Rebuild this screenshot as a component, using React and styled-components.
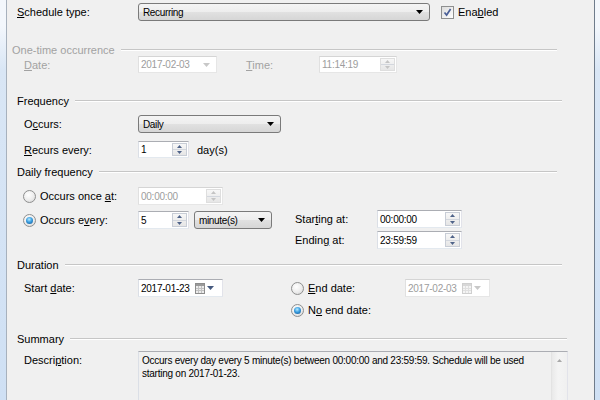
import React from 'react';
import styled, { createGlobalStyle, css } from 'styled-components';

const GlobalStyle = createGlobalStyle`
  html, body {
    margin: 0;
    padding: 0;
    background: #f0f0f0;
  }
  body {
    font-family: "Liberation Sans", Arial, sans-serif;
    font-size: 11px;
    color: #000;
    overflow: hidden;
  }
`;

const Window = styled.div`
  display: flex;
  width: 600px;
  height: 400px;
  overflow: hidden;
  background: #f0f0f0;
`;

const Frame = styled.div`
  flex: none;
  width: ${p => p.$w}px;
  background: linear-gradient(180deg, #f3f7fc 0, #f3f7fc 26px, #d9e6f5 70px, #cfe0f4 100%);
  ${p => (p.$left ? 'border-right: 1px solid #a7b1bd;' : 'border-left: 1px solid #6f7c8b;')}
`;

const Panel = styled.div`
  flex: 1;
  min-width: 0;
  display: flex;
  flex-direction: column;
  padding-top: 3px;
`;

const Key = styled.span`
  text-decoration: underline;
`;

const TopRow = styled.div`
  display: flex;
  align-items: center;
  height: 18px;
  padding-left: 10px;
`;

const Row = styled.div`
  display: flex;
  align-items: center;
  height: ${p => p.$h || 18}px;
  margin-top: ${p => p.$mt || 0}px;
  padding-left: ${p => (p.$pl === undefined ? 17 : p.$pl)}px;
`;

const Label = styled.span`
  flex: none;
  width: ${p => (p.$w ? `${p.$w}px` : 'auto')};
  margin-left: ${p => p.$ml || 0}px;
  white-space: nowrap;
  color: ${p => (p.$disabled ? '#a2a2a2' : '#000')};
`;

const Header = styled.div`
  display: flex;
  align-items: center;
  height: 12px;
  line-height: 12px;
  margin-top: ${p => p.$mt}px;
  padding-left: ${p => p.$pl}px;
  margin-right: ${p => p.$mr}px;
  white-space: nowrap;
  color: ${p => (p.$disabled ? '#a2a2a2' : '#000')};

  &::after {
    content: '';
    flex: 1;
    margin-left: 6px;
    border-top: 1px solid #c6c6c6;
    border-bottom: 1px solid #ffffff;
  }
`;

const Columns = styled.div`
  display: flex;
`;

const Column = styled.div`
  flex: none;
  width: ${p => (p.$w ? `${p.$w}px` : 'auto')};
  display: flex;
  flex-direction: column;
  padding-top: ${p => p.$pt || 0}px;
`;

/* read-only combo box, Win7 look */
const Combo = styled.div`
  flex: none;
  box-sizing: border-box;
  width: ${p => p.$w}px;
  height: 18px;
  margin-left: ${p => p.$ml || 0}px;
  display: flex;
  align-items: center;
  justify-content: space-between;
  padding: 0 6px 0 4px;
  border: 1px solid #7a7a7a;
  border-radius: 3px;
  background: linear-gradient(180deg, #f4f4f4 0%, #ededed 50%, #e1e1e1 50%, #d6d6d6 100%);
`;

const ComboText = styled.span`
  font-size: 10px;
  letter-spacing: -0.35px;
  white-space: nowrap;
`;

const Field = styled.div`
  flex: none;
  box-sizing: border-box;
  width: ${p => p.$w}px;
  height: ${p => p.$h || 17}px;
  display: flex;
  align-items: center;
  padding-left: 2px;
  background: #fff;
  border: 1px solid;
  border-color: ${p => (p.$disabled ? '#d5d5d5 #e6e6e6 #e6e6e6 #e0e0e0' : '#abadb3 #e2e3ea #e3e9ef #dbdfe6')};
  color: ${p => (p.$disabled ? '#9d9d9d' : '#000')};
`;

const FieldText = styled.span`
  flex: 1;
  font-size: 10px;
  letter-spacing: -0.25px;
  white-space: nowrap;
`;

const SpinBox = styled.div`
  flex: none;
  box-sizing: border-box;
  width: 15px;
  height: calc(100% - 2px);
  margin-right: 1px;
  display: flex;
  flex-direction: column;
  border: 1px solid ${p => (p.$disabled ? '#dedede' : '#c8cdd6')};
  background: linear-gradient(180deg, #f7f7f7, #e6e6e6);
`;

const SpinHalf = styled.div`
  flex: 1;
  display: flex;
  align-items: center;
  justify-content: center;
  & + & {
    border-top: 1px solid ${p => (p.$disabled ? '#e2e2e2' : '#d3d7de')};
  }
`;

const PickerButton = styled.div`
  flex: none;
  display: flex;
  align-items: center;
  gap: 2px;
  margin-right: ${p => p.$mr}px;
`;

const Radio = styled.span`
  position: relative;
  flex: none;
  box-sizing: border-box;
  width: 13px;
  height: 13px;
  border-radius: 50%;
  border: 1px solid ${p => (p.$disabled ? '#c0c0c0' : '#8e8f8f')};
  background: radial-gradient(circle at 40% 35%, #ffffff 0%, #ececec 55%, #cfcfcf 100%);

  ${p =>
    p.$checked &&
    css`
      &::after {
        content: '';
        position: absolute;
        left: 2px;
        top: 2px;
        width: 7px;
        height: 7px;
        border-radius: 50%;
        background: radial-gradient(circle at 45% 35%, #b8ebff 0%, #3a9ee0 45%, #0d4f8c 100%);
      }
    `}
`;

const RadioLabel = styled(Label)`
  margin-left: 4px;
`;

const CheckBox = styled.span`
  flex: none;
  box-sizing: border-box;
  width: 13px;
  height: 13px;
  margin-left: 11px;
  display: flex;
  align-items: center;
  justify-content: center;
  border: 1px solid #8e8f8f;
  background: linear-gradient(135deg, #dcdcdc, #ffffff);
`;

const DescRow = styled.div`
  display: flex;
  align-items: flex-start;
  margin-top: 6px;
  padding-left: 17px;
`;

const DescLabel = styled(Label)`
  padding-top: 3px;
`;

const TextArea = styled.div`
  flex: none;
  box-sizing: border-box;
  width: 430px;
  height: 70px;
  display: flex;
  border: 1px solid;
  border-color: #abadb3 #e2e3ea #e3e9ef #dbdfe6;
  background: #f0f0f0;
`;

const TextBody = styled.div`
  flex: 1;
  padding: 2px 3px;
  font-size: 10px;
  letter-spacing: -0.25px;
  line-height: 13px;
  white-space: nowrap;
  overflow: hidden;
`;

const ScrollBar = styled.div`
  flex: none;
  width: 15px;
  display: flex;
  justify-content: center;
  padding-top: 7px;
  border-left: 1px solid #e3e3e3;
  background: linear-gradient(90deg, #e9e9e9, #f4f4f4 40%, #f0f0f0);
`;

const Arrow = ({ up, color = '#000', w = 7, h = 4 }) => (
  <svg width={w} height={h} viewBox={`0 0 ${w} ${h}`}>
    <path d={up ? `M0 ${h}H${w}L${w / 2} 0Z` : `M0 0H${w}L${w / 2} ${h}Z`} fill={color} />
  </svg>
);

const Spin = ({ w, h, value, disabled }) => {
  const c = disabled ? '#c4c4c4' : '#4f6389';
  return (
    <Field $w={w} $h={h} $disabled={disabled}>
      <FieldText>{value}</FieldText>
      <SpinBox $disabled={disabled}>
        <SpinHalf $disabled={disabled}>
          <Arrow up w={5} h={3} color={c} />
        </SpinHalf>
        <SpinHalf $disabled={disabled}>
          <Arrow w={5} h={3} color={c} />
        </SpinHalf>
      </SpinBox>
    </Field>
  );
};

const CalendarIcon = ({ disabled }) => {
  const s = disabled ? '#cfcfcf' : '#8d8d8d';
  return (
    <svg width="10" height="11" viewBox="0 0 10 11">
      <rect x="0.5" y="0.5" width="9" height="10" fill={disabled ? '#f4f4f4' : '#ececec'} stroke={s} />
      <rect x="1" y="1" width="8" height="2" fill={disabled ? '#d8d8d8' : '#9a9a9a'} />
      <path d="M1 5.5H9M1 7.5H9M3.5 3V10M6.5 3V10" stroke={disabled ? '#e0e0e0' : '#c2c2c2'} strokeWidth="1" />
    </svg>
  );
};

const DatePicker = ({ w, h, value, disabled, plain }) => (
  <Field $w={w} $h={h} $disabled={disabled}>
    <FieldText>{value}</FieldText>
    <PickerButton $mr={plain ? 6 : 8}>
      {!plain && <CalendarIcon disabled={disabled} />}
      <Arrow w={7} h={4} color={disabled ? '#c8c8c8' : '#45597e'} />
    </PickerButton>
  </Field>
);

const Dropdown = ({ w, ml, value }) => (
  <Combo $w={w} $ml={ml}>
    <ComboText>{value}</ComboText>
    <Arrow />
  </Combo>
);

const Check = () => (
  <CheckBox>
    <svg width="9" height="9" viewBox="0 0 9 9">
      <path d="M1.5 4.5L3.6 7L7.6 1" fill="none" stroke="#4a5f97" strokeWidth="1.7" />
    </svg>
  </CheckBox>
);

const App = () => (
  <Window>
    <GlobalStyle />
    <Frame $left $w={6} />
    <Panel>
      <TopRow>
        <Label $w={121}>
          <Key>S</Key>chedule type:
        </Label>
        <Dropdown w={292} value="Recurring" />
        <Check />
        <Label $ml={4}>
          Ena<Key>b</Key>led
        </Label>
      </TopRow>

      <Header $mt={23} $pl={5} $mr={37} $disabled>
        One-time occurrence
      </Header>
      <Row $h={17}>
        <Label $w={114} $disabled>
          <Key>D</Key>ate:
        </Label>
        <DatePicker w={79} value="2017-02-03" disabled plain />
        <Label $w={73} $ml={29} $disabled>
          <Key>T</Key>ime:
        </Label>
        <Spin w={78} value="11:14:19" disabled />
      </Row>

      <Header $mt={22} $pl={10} $mr={32}>
        Frequency
      </Header>
      <Row $mt={8}>
        <Label $w={114}>
          O<Key>c</Key>curs:
        </Label>
        <Dropdown w={143} value="Daily" />
      </Row>
      <Row $mt={8}>
        <Label $w={114}>
          <Key>R</Key>ecurs every:
        </Label>
        <Spin w={51} value="1" />
        <Label $ml={8}>day(s)</Label>
      </Row>

      <Header $mt={8} $pl={10} $mr={37}>
        Daily frequency
      </Header>
      <Columns>
        <Column $w={288} $pt={9}>
          <Row $pl={16}>
            <Radio />
            <RadioLabel $w={98}>
              Occurs once <Key>a</Key>t:
            </RadioLabel>
            <Spin w={85} h={18} value="00:00:00" disabled />
          </Row>
          <Row $pl={16} $mt={6}>
            <Radio $checked />
            <RadioLabel $w={98}>
              Occurs e<Key>v</Key>ery:
            </RadioLabel>
            <Spin w={51} h={18} value="5" />
            <Dropdown w={78} ml={5} value="minute(s)" />
          </Row>
        </Column>
        <Column $pt={32}>
          <Row $pl={0}>
            <Label $w={82}>
              Star<Key>t</Key>ing at:
            </Label>
            <Spin w={85} h={18} value="00:00:00" />
          </Row>
          <Row $pl={0} $mt={3}>
            <Label $w={82}>
              Endin<Key>g</Key> at:
            </Label>
            <Spin w={85} h={18} value="23:59:59" />
          </Row>
        </Column>
      </Columns>

      <Header $mt={10} $pl={10} $mr={32}>
        Duration
      </Header>
      <Columns>
        <Column $w={284} $pt={8}>
          <Row>
            <Label $w={114}>
              Start <Key>d</Key>ate:
            </Label>
            <DatePicker w={85} h={18} value="2017-01-23" />
          </Row>
        </Column>
        <Column $pt={8}>
          <Row $pl={0}>
            <Radio />
            <RadioLabel $w={97}>
              <Key>E</Key>nd date:
            </RadioLabel>
            <DatePicker w={85} h={18} value="2017-02-03" disabled />
          </Row>
          <Row $pl={0} $mt={4}>
            <Radio $checked />
            <RadioLabel>
              N<Key>o</Key> end date:
            </RadioLabel>
          </Row>
        </Column>
      </Columns>

      <Header $mt={14} $pl={10} $mr={27}>
        Summary
      </Header>
      <DescRow>
        <DescLabel $w={114}>
          Descri<Key>p</Key>tion:
        </DescLabel>
        <TextArea>
          <TextBody>
            Occurs every day every 5 minute(s) between 00:00:00 and 23:59:59. Schedule will be used
            <br />
            starting on 2017-01-23.
          </TextBody>
          <ScrollBar>
            <Arrow up w={5} h={3} color="#a8a8a8" />
          </ScrollBar>
        </TextArea>
      </DescRow>
    </Panel>
    <Frame $w={5} />
  </Window>
);

export default App;
